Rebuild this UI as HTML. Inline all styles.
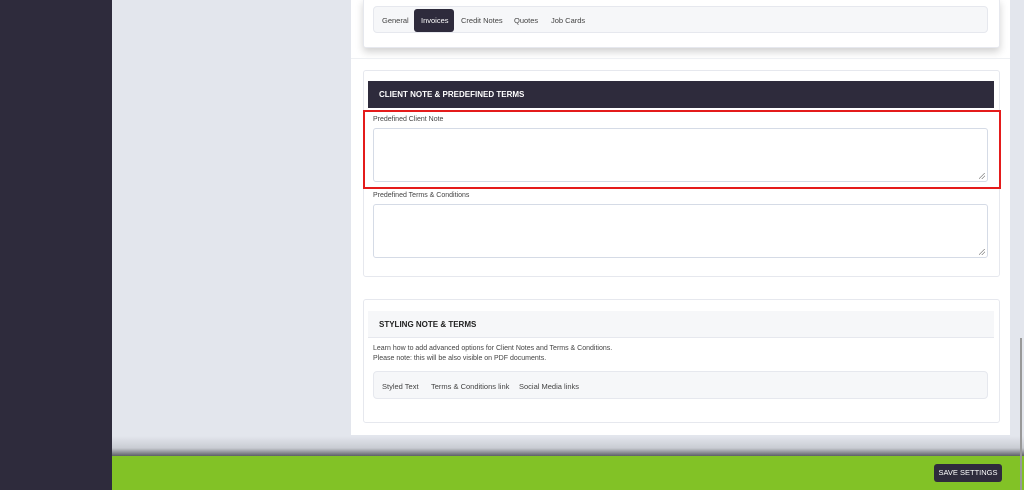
<!DOCTYPE html>
<html><head><style>
*{box-sizing:border-box;margin:0;padding:0}
body{width:1024px;height:490px;overflow:hidden;background:#e3e6ed;font-family:"Liberation Sans",sans-serif;position:relative;color:#333}
.abs{position:absolute}
.side{left:0;top:0;width:112px;height:490px;background:#2e2b3c}
.panel{left:351px;top:0;width:659px;height:435px;background:#fff}
.card{background:#fff;border:1px solid #e6e8ee;border-radius:3px}
.tabs{background:#f6f7f9;border:1px solid #e6e8ee;border-radius:4px;font-size:7.5px;color:#444}
.tabs span{position:absolute;top:9px}
.lbl{font-size:7px;color:#444}
.ta{background:#fff;border:1px solid #d5dbe6;border-radius:3px}
.grip{position:absolute;right:2px;bottom:2px;width:6px;height:6px;background:linear-gradient(135deg,transparent 45%,#888 45%,#888 52%,transparent 52%,transparent 70%,#888 70%,#888 77%,transparent 77%)}
</style></head><body>
<div class="abs side"></div>
<div class="abs panel"></div>
<div class="abs card" style="left:363px;top:-2px;width:637px;height:50px;box-shadow:0 4px 8px rgba(0,0,0,.18)"></div>
<div class="abs tabs" style="left:373px;top:6px;width:615px;height:27px">
<span style="left:8px">General</span>
<div class="abs" style="left:40px;top:2px;width:40px;height:23px;background:#2e2b3c;border-radius:3px"></div>
<span style="left:47px;color:#fff">Invoices</span>
<span style="left:87px">Credit Notes</span>
<span style="left:140px">Quotes</span>
<span style="left:177px">Job Cards</span>
</div>
<div class="abs" style="left:351px;top:58px;width:659px;height:1px;background:#eef0f3"></div>
<div class="abs card" style="left:363px;top:70px;width:637px;height:207px"></div>
<div class="abs" style="left:368px;top:81px;width:626px;height:27px;background:#2e2b3c;color:#fff;font-size:8px;font-weight:bold;padding:9px 11px">CLIENT NOTE &amp; PREDEFINED TERMS</div>
<div class="abs" style="left:363px;top:110px;width:638px;height:79px;border:2px solid #e41b1b"></div>
<div class="abs lbl" style="left:373px;top:116px">Predefined Client Note</div>
<div class="abs ta" style="left:373px;top:128px;width:615px;height:54px"><div class="grip"></div></div>
<div class="abs lbl" style="left:373px;top:192px">Predefined Terms &amp; Conditions</div>
<div class="abs ta" style="left:373px;top:204px;width:615px;height:54px"><div class="grip"></div></div>
<div class="abs card" style="left:363px;top:299px;width:637px;height:124px"></div>
<div class="abs" style="left:368px;top:311px;width:626px;height:27px;background:#f6f7f9;border-bottom:1px solid #e6e8ee;font-size:8px;font-weight:bold;padding:9px 11px;color:#222">STYLING NOTE &amp; TERMS</div>
<div class="abs" style="left:373px;top:344px;font-size:7px;line-height:10px;color:#444">Learn how to add advanced options for Client Notes and Terms &amp; Conditions.<br>Please note: this will be also visible on PDF documents.</div>
<div class="abs tabs" style="left:373px;top:371px;width:615px;height:28px">
<span style="left:8px;top:10px">Styled Text</span>
<span style="left:57px;top:10px">Terms &amp; Conditions link</span>
<span style="left:145px;top:10px">Social Media links</span>
</div>
<div class="abs" style="left:112px;top:436px;width:912px;height:20px;background:linear-gradient(#e3e6ed,#c9ccd3 60%,#5e6065)"></div>
<div class="abs" style="left:112px;top:456px;width:912px;height:34px;background:#82c226"></div>
<div class="abs" style="left:934px;top:464px;width:68px;height:18px;background:#2e2b3c;border-radius:3px;color:#fff;font-size:7.5px;text-align:center;line-height:18px">SAVE SETTINGS</div>
<div class="abs" style="left:1020px;top:338px;width:2px;height:152px;background:#999"></div>
</body></html>
